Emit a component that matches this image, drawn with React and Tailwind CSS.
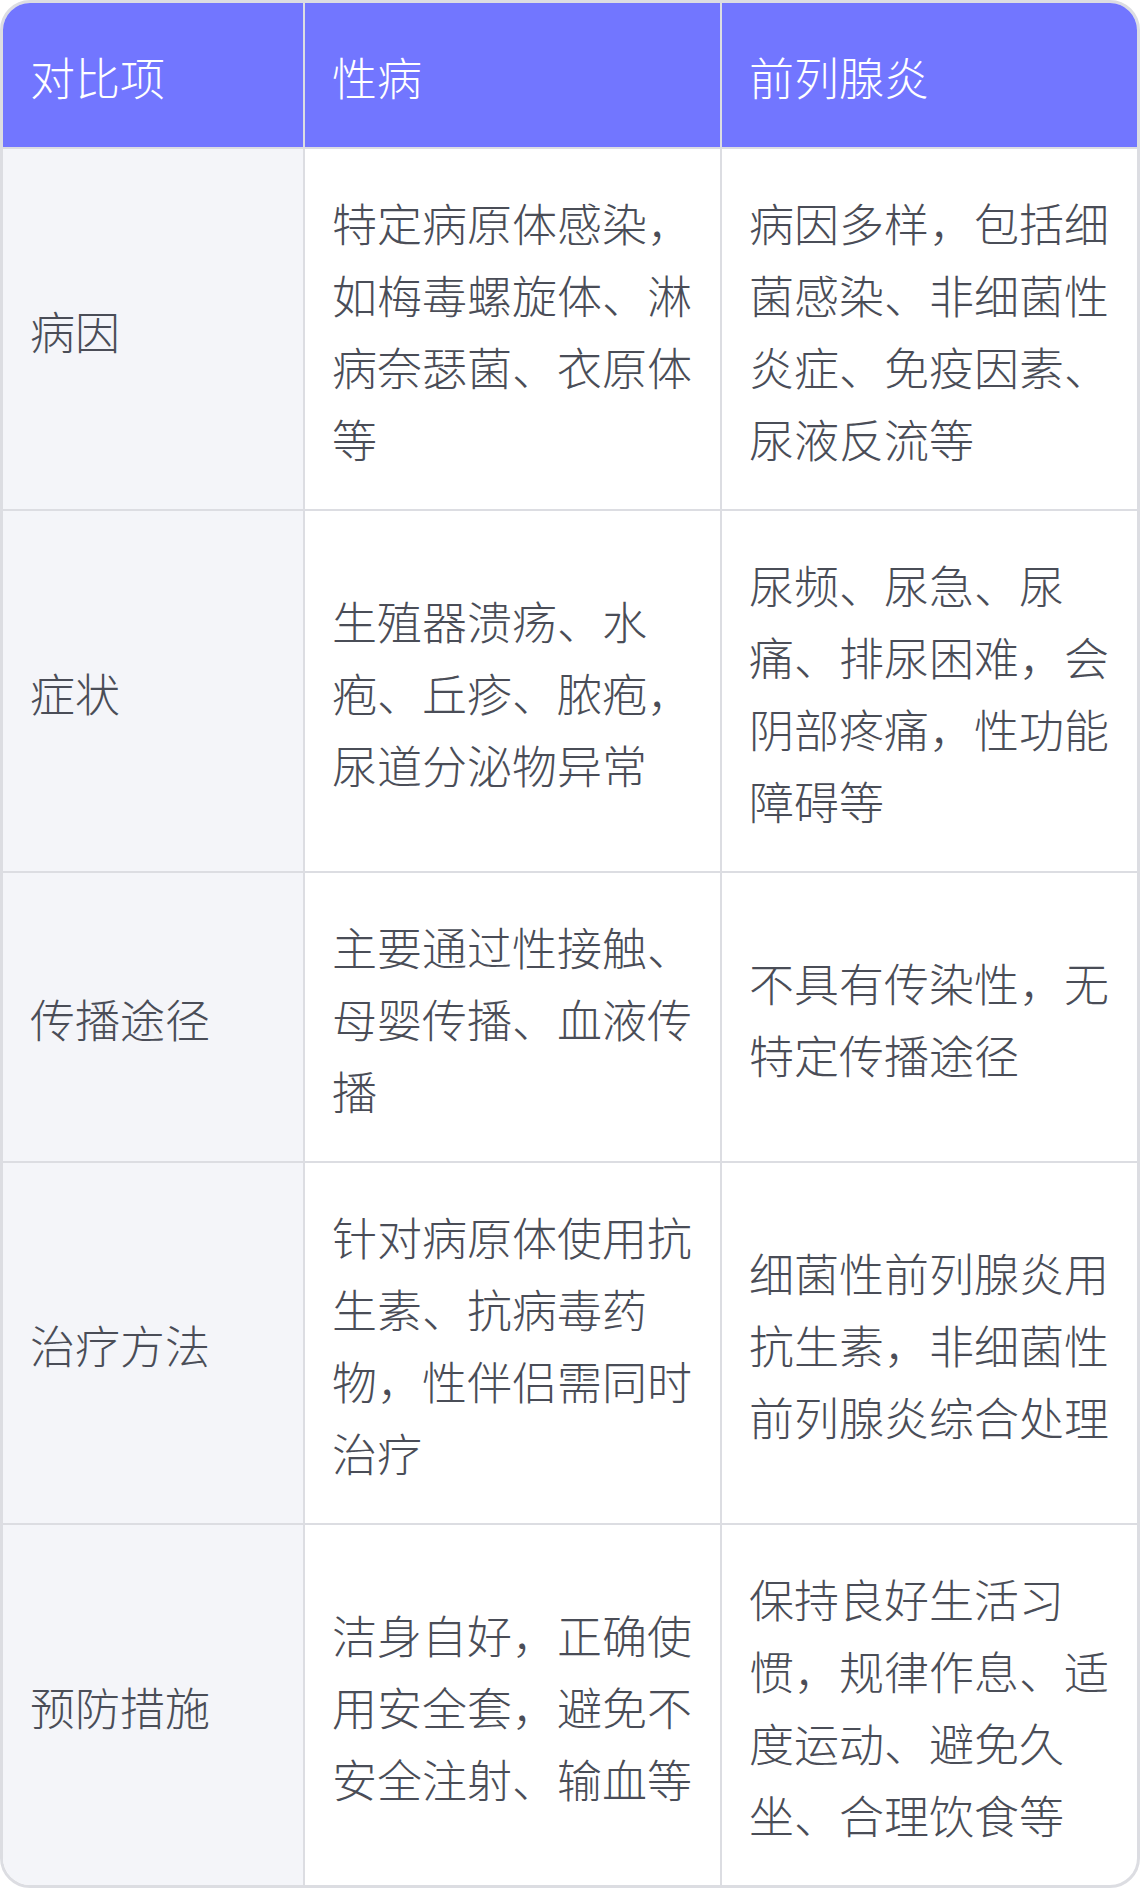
import React from 'react';

const rows = [
  {
    item: "病因",
    std: "特定病原体感染，如梅毒螺旋体、淋病奈瑟菌、衣原体等",
    pro: "病因多样，包括细菌感染、非细菌性炎症、免疫因素、尿液反流等",
  },
  {
    item: "症状",
    std: "生殖器溃疡、水疱、丘疹、脓疱，尿道分泌物异常",
    pro: "尿频、尿急、尿痛、排尿困难，会阴部疼痛，性功能障碍等",
  },
  {
    item: "传播途径",
    std: "主要通过性接触、母婴传播、血液传播",
    pro: "不具有传染性，无特定传播途径",
  },
  {
    item: "治疗方法",
    std: "针对病原体使用抗生素、抗病毒药物，性伴侣需同时治疗",
    pro: "细菌性前列腺炎用抗生素，非细菌性前列腺炎综合处理",
  },
  {
    item: "预防措施",
    std: "洁身自好，正确使用安全套，避免不安全注射、输血等",
    pro: "保持良好生活习惯，规律作息、适度运动、避免久坐、合理饮食等",
  },
];

export default function App() {
  return (
    <div className="w-[1140px] h-[1888px] bg-white font-['Noto_Sans_CJK_SC','Noto_Sans',sans-serif] font-light text-[45px] leading-[72px]">
      <div className="border-[3px] border-[#dcdde2] rounded-[30px] overflow-hidden">
        {/* header */}
        <div className="grid grid-cols-[302px_417px_1fr] bg-[#7276ff] text-white border-b-2 border-[#dcdde2]">
          <div className="px-[27px] pt-[38px] pb-[34px] border-r-2 border-[#dcdde2]">对比项</div>
          <div className="px-[27px] pt-[38px] pb-[34px] border-r-2 border-[#dcdde2]">性病</div>
          <div className="px-[27px] pt-[38px] pb-[34px]">前列腺炎</div>
        </div>

        {rows.map((r, i) => (
          <div
            key={i}
            className={
              "grid grid-cols-[302px_417px_1fr] text-[#4a4d57] " +
              (i < rows.length - 1 ? "border-b-2 border-[#dcdde2]" : "")
            }
          >
            <div className="flex items-center px-[27px] pt-[38px] pb-[34px] bg-[#f4f5f9] border-r-2 border-[#dcdde2]">
              {r.item}
            </div>
            <div className="flex items-center px-[27px] pt-[38px] pb-[34px] border-r-2 border-[#dcdde2]">
              <p>{r.std}</p>
            </div>
            <div className="flex items-center px-[27px] pt-[38px] pb-[34px]">
              <p>{r.pro}</p>
            </div>
          </div>
        ))}
      </div>
    </div>
  );
}
